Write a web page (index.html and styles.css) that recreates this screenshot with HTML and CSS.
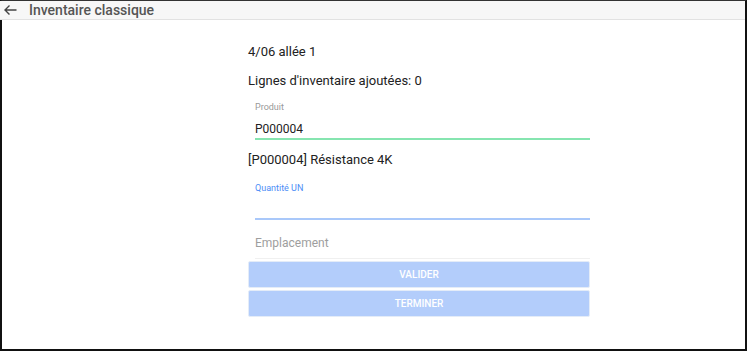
FILE: index.html
```html
<!DOCTYPE html>
<html>
    <head>
        <title>Inventaire classique</title>
        <link rel="stylesheet" href="styles.css">
    </head>
    <body>
        <div class="screen">
            <div class="toolbar">
                <svg class="back" width="14" height="12" viewBox="0 0 14 12">
                    <path d="M13.5 6H2M6.5 1.5L2 6l4.5 4.5" fill="none" stroke="#444" stroke-width="1.4"/>
                </svg>
                <span class="title">Inventaire classique</span>
            </div>

            <div class="content">
                <div class="form">
                    <p class="line first">4/06 allée 1</p>
                    <p class="line">Lignes d'inventaire ajoutées: 0</p>

                    <div class="field valid">
                        <div class="label">Produit</div>
                        <div class="value">P000004</div>
                    </div>

                    <p class="product">[P000004] Résistance 4K</p>

                    <div class="field focused">
                        <div class="label">Quantité UN</div>
                        <div class="value"></div>
                    </div>

                    <div class="field empty">
                        <div class="placeholder">Emplacement</div>
                    </div>

                    <button type="button" class="btn">VALIDER</button>
                    <button type="button" class="btn">TERMINER</button>
                </div>
            </div>
        </div>
    </body>
</html>
```

FILE: styles.css
```css
html, body {
    margin: 0;
    padding: 0;
}

body {
    font-family: Roboto, "Liberation Sans", sans-serif;
    color: #222;
    background: #fff;
}

.screen {
    width: 747px;
    height: 351px;
    box-sizing: border-box;
    border-top: 1px solid #333;
    border-right: 2px solid #111;
    border-bottom: 2px solid #111;
    border-left: 2px solid #111;
    display: flex;
    flex-direction: column;
}

.toolbar {
    height: 18px;
    margin-left: -2px;
    background: #f7f7f7;
    border-bottom: 1px solid #e2e2e2;
    display: flex;
    align-items: center;
}

.back {
    margin-left: 3px;
    margin-right: 12px;
}

.title {
    font-size: 14px;
    font-weight: 500;
    color: #555;
}

.content {
    padding-left: 246px;
}

.form {
    width: 342px;
    padding-top: 22px;
}

.line {
    margin: 0 0 9px 0;
    font-size: 13px;
    line-height: 20px;
}

.field {
    margin-left: 7px;
}

.field .label {
    font-size: 9px;
    line-height: 12px;
    color: #999;
}

.field .value {
    margin-top: 7px;
    font-size: 12px;
    line-height: 18px;
    height: 18px;
    border-bottom: 2px solid #86e5b0;
}

.field.valid {
    margin-top: 10px;
}

.field.focused {
    margin-top: 12px;
}

.field.focused .label {
    color: #4c8df6;
}

.field.focused .value {
    height: 24px;
    margin-top: 0;
    border-bottom-color: #a9c8fa;
}

.field.empty {
    height: 38px;
    border-bottom: 1px solid #f0f0f0;
    display: flex;
    align-items: center;
}

.placeholder {
    font-size: 12px;
    color: #9e9e9e;
    padding-top: 8px;
}

.product {
    margin: 10px 0 0 0;
    font-size: 13px;
    line-height: 20px;
}

.btn {
    display: block;
    width: 342px;
    height: 27px;
    margin-top: 2px;
    border: 1px solid #e4ecf8;
    border-radius: 2px;
    background: #b3cdfb;
    color: #fff;
    font-family: Roboto, "Liberation Sans", sans-serif;
    font-size: 10px;
    font-weight: 500;
}
```
